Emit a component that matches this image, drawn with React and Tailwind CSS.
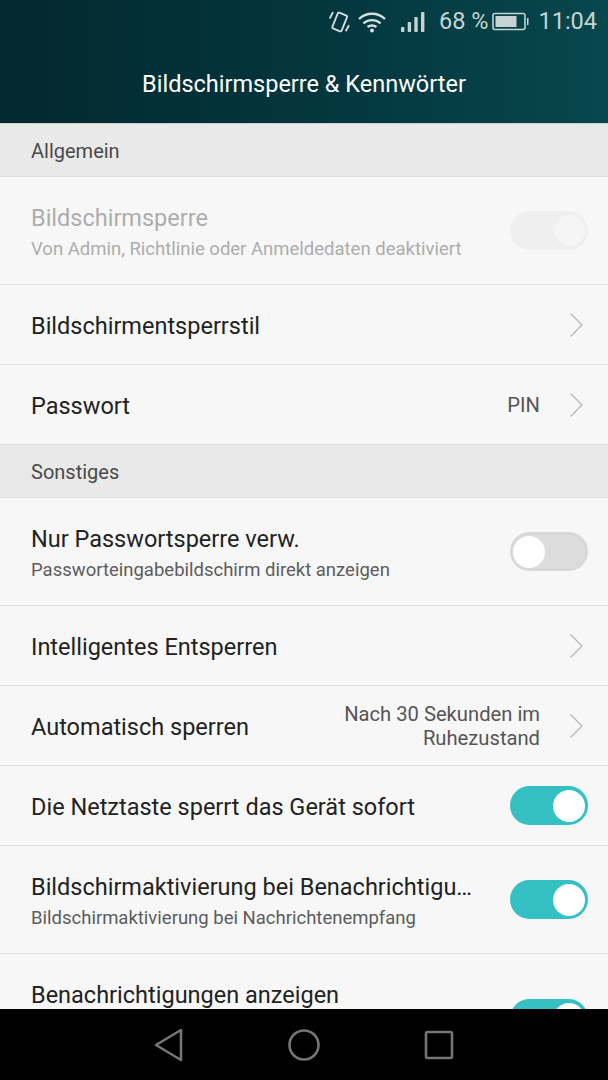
function Chevron() {
  return (
    <svg width="16" height="26" viewBox="0 0 16 26" fill="none" className="shrink-0">
      <path d="M2.5 1.5 L14 13 L2.5 24.5" stroke="#b4b4b4" strokeWidth="1.2" />
    </svg>
  )
}

function Toggle({ on, disabled }) {
  if (disabled) {
    return (
      <div className="w-[78px] h-[39px] rounded-full bg-[#efefef] flex items-center justify-end pr-[3px] shrink-0">
        <div className="w-[31px] h-[31px] rounded-full bg-[#f5f5f5]" />
      </div>
    )
  }
  if (on) {
    return (
      <div className="w-[78px] h-[39px] rounded-full bg-[#35c0c4] flex items-center justify-end pr-[3px] shrink-0">
        <div className="w-[32px] h-[32px] rounded-full bg-white" />
      </div>
    )
  }
  return (
    <div className="w-[78px] h-[39px] rounded-full bg-[#dddddd] border-[3px] border-[#d8d8d8] flex items-center shrink-0">
      <div className="w-[32px] h-[32px] rounded-full bg-white" />
    </div>
  )
}

function SectionHeader({ title }) {
  return (
    <div className="h-[53px] bg-[#e9e9e9] border-b border-[#dedede] flex items-center pl-[31px] pt-[1px] text-[20px] text-[#4a4a4a]">
      {title}
    </div>
  )
}

function Row({ title, sub, value, chevron, toggle, disabled, height, textClass = 'pt-[2px]' }) {
  return (
    <div className={`${height} border-b border-[#e2e2e2] flex items-center pl-[31px] ${toggle ? 'pr-[20px]' : 'pr-[24px]'}`}>
      <div className={`flex-1 min-w-0 ${textClass} ${toggle ? 'pr-[35px]' : ''}`}>
        <div className={`text-[23.5px] leading-[30px] truncate ${disabled ? 'text-[#adadad]' : 'text-[#222222]'}`}>{title}</div>
        {sub && (
          <div className={`text-[18.5px] leading-[24px] mt-[4px] whitespace-nowrap ${disabled ? 'text-[#adadad]' : 'text-[#5c5c5c]'}`}>{sub}</div>
        )}
      </div>
      {value && (
        <div className="text-[20.2px] leading-[24px] text-[#555555] text-right mr-[28px] shrink-0">{value}</div>
      )}
      {chevron && <Chevron />}
      {toggle && <Toggle on={toggle === 'on'} disabled={disabled} />}
    </div>
  )
}

function StatusIcons() {
  return (
    <div className="flex items-center h-[43px] pr-[11px] justify-end text-[#c5d3d3]">
      <svg width="22" height="24" viewBox="0 0 22 24" fill="none" stroke="#d5e0e0" strokeWidth="1.8" className="mr-[7px]">
        <rect x="6.7" y="3.5" width="10" height="17" rx="1.2" transform="rotate(22 11.7 12)" />
        <path d="M1.7 8.7 L5 2 M17.7 21.3 L21 15.3" />
      </svg>
      <svg width="30" height="22" viewBox="0 0 30 22" fill="none" stroke="#d5e0e0" strokeWidth="2.4" className="mr-[13px]">
        <path d="M2 8 C9 1 21 1 28 8" />
        <path d="M6.5 12.5 C11 8 19 8 23.5 12.5" />
        <path d="M10.5 16 C13 14 17 14 19.5 16" />
        <circle cx="15" cy="19.5" r="2" fill="#d5e0e0" stroke="none" />
      </svg>
      <svg width="26" height="22" viewBox="0 0 26 22" fill="#c5d3d3" className="mr-[13px]">
        <rect x="1" y="16" width="3.4" height="5" rx="0.8" />
        <rect x="7.7" y="11" width="3.4" height="10" rx="0.8" />
        <rect x="14.3" y="6" width="3.4" height="15" rx="0.8" />
        <rect x="21" y="1" width="3.4" height="20" rx="0.8" />
      </svg>
      <span className="text-[23.5px] leading-none mr-[4px]">68 %</span>
      <svg width="38" height="20" viewBox="0 0 38 20" fill="none" className="mr-[8px]">
        <rect x="1" y="1.5" width="32" height="16" rx="2" stroke="#c5d3d3" strokeWidth="1.6" />
        <rect x="3.5" y="4" width="21" height="11" fill="#c5d3d3" />
        <path d="M35 6 h1.5 v7 h-1.5 z" fill="#c5d3d3" />
      </svg>
      <span className="text-[23.5px] leading-none">11:04</span>
    </div>
  )
}

export default function App() {
  return (
    <div className="w-[608px] h-[1080px] overflow-hidden flex flex-col bg-[#f7f7f7] font-['Roboto',sans-serif]">
      <div className="h-[124px] shrink-0 border-b border-[#c9d0d0] bg-gradient-to-r from-[#03282f] via-[#04353d] to-[#07474d]">
        <StatusIcons />
        <div className="text-center text-white text-[23.5px] leading-[30px] mt-[26px]">Bildschirmsperre &amp; Kennwörter</div>
      </div>
      <div className="flex-1 min-h-0 overflow-hidden">
        <SectionHeader title="Allgemein" />
        <Row height="h-[108px]" title="Bildschirmsperre" sub="Von Admin, Richtlinie oder Anmeldedaten deaktiviert" toggle="on" disabled />
        <Row height="h-[80px]" title="Bildschirmentsperrstil" chevron />
        <Row height="h-[80px]" title="Passwort" value="PIN" chevron />
        <SectionHeader title="Sonstiges" />
        <Row height="h-[108px]" title="Nur Passwortsperre verw." sub="Passworteingabebildschirm direkt anzeigen" toggle="off" />
        <Row height="h-[80px]" title="Intelligentes Entsperren" chevron />
        <Row height="h-[80px]" title="Automatisch sperren" value={<>Nach 30 Sekunden im<br />Ruhezustand</>} chevron />
        <Row height="h-[80px]" title="Die Netztaste sperrt das Gerät sofort" toggle="on" />
        <Row height="h-[108px]" title="Bildschirmaktivierung bei Benachrichtigungen" sub="Bildschirmaktivierung bei Nachrichtenempfang" toggle="on" />
        {/* taller row, its second line sits behind the nav bar */}
        <Row height="h-[130px]" title="Benachrichtigungen anzeigen" toggle="on" textClass="pb-[48px]" />
      </div>
      <div className="h-[71px] shrink-0 bg-black flex items-center justify-center gap-[104px]">
        <svg width="30" height="34" viewBox="0 0 30 34" fill="none" stroke="#757575" strokeWidth="2.6" strokeLinejoin="round">
          <path d="M27 2 L2 17 L27 32 Z" />
        </svg>
        <svg width="32" height="32" viewBox="0 0 32 32" fill="none" stroke="#757575" strokeWidth="2.6">
          <circle cx="16" cy="16" r="14.5" />
        </svg>
        <svg width="30" height="30" viewBox="0 0 30 30" fill="none" stroke="#757575" strokeWidth="2.6">
          <rect x="2" y="2" width="26" height="26" rx="1.5" />
        </svg>
      </div>
    </div>
  )
}
